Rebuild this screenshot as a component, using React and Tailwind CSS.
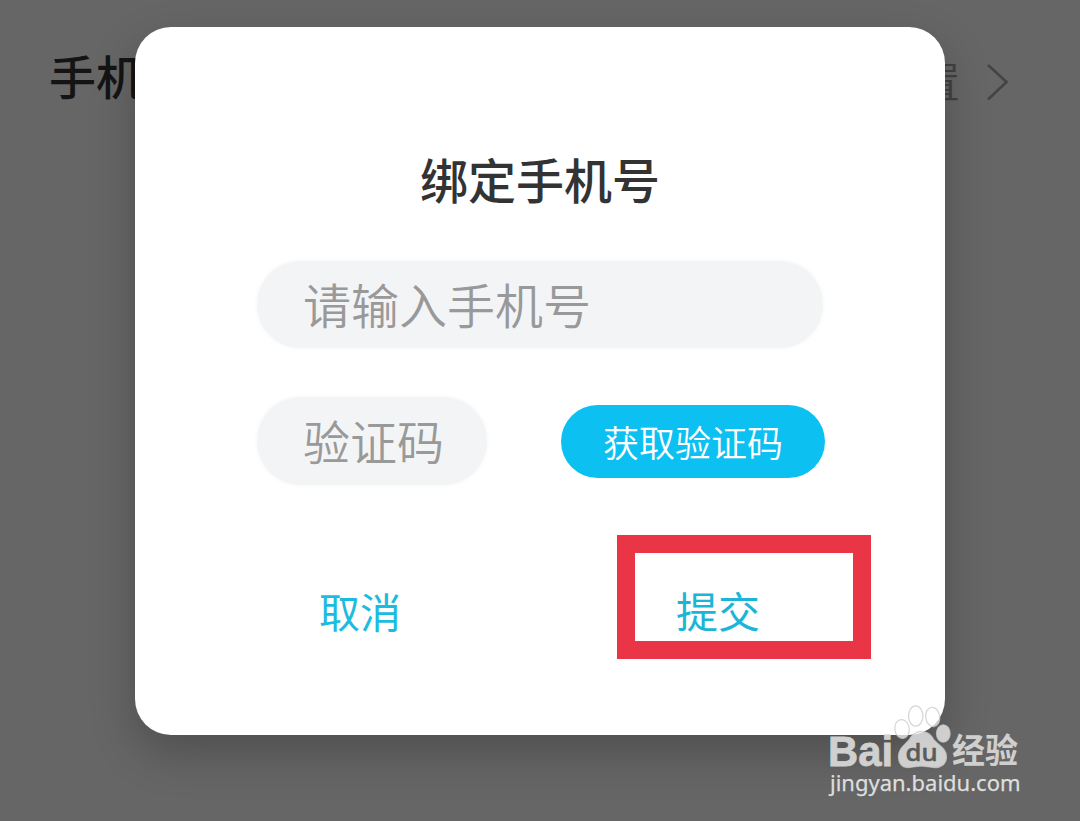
function Watermark() {
  return (
    <svg
      className="absolute left-[820px] top-[698px] font-['Noto_Sans','Noto_Sans_CJK_SC',sans-serif]"
      width="210"
      height="108"
      viewBox="820 698 210 108"
    >
      <g fill="#fff" fillOpacity="0.7" stroke="#c9c9c9" strokeOpacity="0.75" strokeWidth="1.3">
        <ellipse cx="902" cy="729" rx="7.2" ry="9.5" transform="rotate(-8 902 729)" />
        <ellipse cx="915.7" cy="716" rx="7.2" ry="10.2" />
        <ellipse cx="932.7" cy="717" rx="7" ry="9.7" transform="rotate(-8 932.7 717)" />
        <ellipse cx="943.3" cy="733.5" rx="6.8" ry="8.7" />
        <path d="M921 731.500C928 731.500 931 735 934 740C938 745 946.500 748 946.500 757C946.500 764 941 767.500 935 767.500C929 767.500 926 766 921 766C916 766 914 767.500 908 767.500C902 767.500 898.500 763 898.500 757C898.500 748 905 745 909 740C912 735 915 731.500 921 731.500Z" />
      </g>
      <text x="828" y="765.5" fontSize="43" fontWeight="700" fill="#d0d0d0" stroke="#d0d0d0" strokeWidth="0.8" textLength="65" lengthAdjust="spacingAndGlyphs" fontFamily="Liberation Sans, sans-serif">Bai</text>
      <text x="905.500" y="761" fontSize="24" fontWeight="500" fill="#5b5b5b" stroke="#5b5b5b" strokeWidth="0.5" textLength="32" lengthAdjust="spacingAndGlyphs">du</text>
      <text x="952" y="763" fontSize="34" fontWeight="700" fill="#cfcfcf" textLength="66" lengthAdjust="spacingAndGlyphs" fontFamily="Noto Sans CJK SC, sans-serif">经验</text>
      <text x="830" y="791" fontSize="22.5" fill="#dedede" stroke="#dedede" strokeWidth="0.25" textLength="190.500" lengthAdjust="spacingAndGlyphs">jingyan.baidu.com</text>
    </svg>
  );
}

export default function App() {
  return (
    <div className="relative h-[821px] w-[1080px] overflow-hidden bg-[#666] font-['Noto_Sans_CJK_SC',sans-serif]">
      <div className="flex items-start justify-between pt-[40px] pr-[70px] pl-[49px]">
        <span className="text-[47px] leading-[70px] font-medium text-[#141414]">手机号</span>
        <div className="flex items-center gap-[26px] pt-[5px]">
          <span className="text-[42px] leading-[70px] font-[350] text-[#414141]">未设置</span>
          <svg className="mt-1" width="24" height="38" viewBox="0 0 24 38" fill="none" stroke="#444" strokeWidth="2.6">
            <path d="M2 2L20.500 19L2 36.500" />
          </svg>
        </div>
      </div>

      <div className="absolute inset-x-[135px] top-[27px] flex h-[708px] flex-col rounded-[36px] bg-white shadow-[0_18px_46px_rgba(0,0,0,0.23)]">
        <h1 className="mt-[116px] text-center text-[48px] leading-[70px] font-medium text-[#333]">绑定手机号</h1>

        <div className="mt-[48px] ml-[122px] flex h-[87px] w-[566px] items-center rounded-full bg-[#f3f4f5] pb-[4px] pl-[46px] shadow-[0_0_5px_#f3f4f5]">
          <span className="text-[48px] leading-[70px] font-[350] text-[#999]">请输入手机号</span>
        </div>

        <div className="mt-[49px] ml-[122px] flex items-center">
          <div className="flex h-[88px] w-[230px] items-center rounded-full bg-[#f3f4f5] pb-[3px] pl-[46px] shadow-[0_0_5px_#f3f4f5]">
            <span className="text-[47px] leading-[70px] font-[350] text-[#999]">验证码</span>
          </div>
          <button className="ml-[74px] flex h-[73px] w-[264px] items-center justify-center rounded-full bg-[#0cc1f1] text-[36px] leading-[52px] font-[350] text-white">
            获取验证码
          </button>
        </div>

        <div className="mt-[50px] flex items-start justify-between pr-[74px] pl-[184px]">
          <button className="mt-[45px] text-[41px] leading-[60px] text-[#1cbbe0]">取消</button>
          <button className="flex h-[124px] w-[254px] border-[18px] border-[#ea3546] pt-[27px] pl-[41px] text-[42px] leading-[60px] text-[#1cb5d8]">
            提交
          </button>
        </div>
      </div>
      <Watermark />
    </div>
  );
}
